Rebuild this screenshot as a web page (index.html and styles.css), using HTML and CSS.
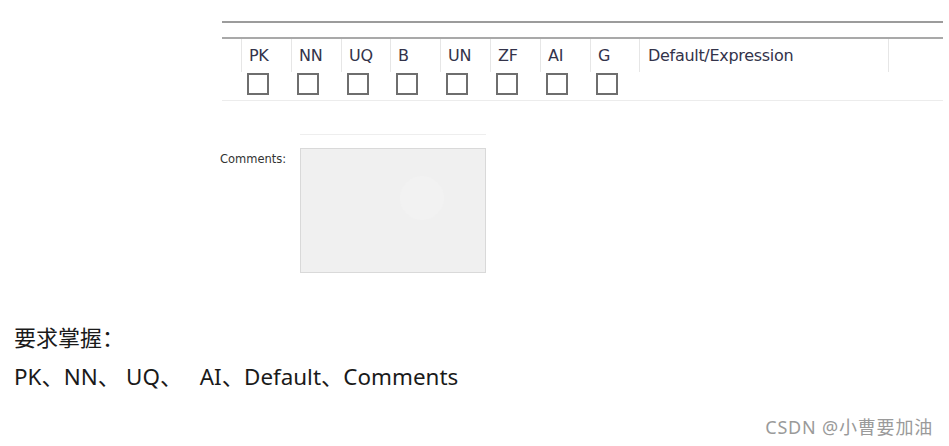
FILE: index.html
```html
<!DOCTYPE html>
<html>
<head>
  <meta charset="utf-8">
  <title>Columns</title>
  <link rel="stylesheet" href="styles.css">
</head>
<body>

  <div class="table">
    <div class="rule-top"></div>
    <div class="rule-second"></div>

    <div class="grid">
      <div class="head"></div>
      <div class="head">PK</div>
      <div class="head">NN</div>
      <div class="head">UQ</div>
      <div class="head">B</div>
      <div class="head">UN</div>
      <div class="head">ZF</div>
      <div class="head">AI</div>
      <div class="head">G</div>
      <div class="head wide">Default/Expression</div>
      <div class="head"></div>

      <div class="cell"></div>
      <div class="cell"><span class="check"></span></div>
      <div class="cell"><span class="check"></span></div>
      <div class="cell"><span class="check"></span></div>
      <div class="cell"><span class="check"></span></div>
      <div class="cell"><span class="check"></span></div>
      <div class="cell"><span class="check"></span></div>
      <div class="cell"><span class="check"></span></div>
      <div class="cell"><span class="check"></span></div>
      <div class="cell"></div>
      <div class="cell"></div>
    </div>

    <div class="rule-bottom"></div>
  </div>
  <!-- /.table -->

  <div class="comments">
    <label class="comments-label">Comments:</label>
    <div class="field">
      <div class="field-line"></div>
      <div class="field-box"></div>
    </div>
  </div>

  <div class="notes">
    <p>要求掌握：</p>
    <p class="keys">PK、NN、 UQ、   AI、Default、Comments</p>
  </div>

  <div class="mark">CSDN @小曹要加油</div>

</body>
</html>
```

FILE: styles.css
```css
body {
  margin: 0;
  background: #FFF;
  color: #1A1A1A;
  font-family: "Noto Sans", "Noto Sans CJK SC", sans-serif;
}

/* column editor strip */

.table {
  margin-left: 222px;
  width: 721px;
  padding-top: 21px;
}

.rule-top {
  height: 2px;
  background: #9C9C9C;
  margin-bottom: 14px;
}

.rule-second {
  height: 2px;
  background: #A9A9A9;
}

.grid {
  display: grid;
  grid-template-columns: 19px 50px 50px 49px 50px 50px 50px 50px 49px 249px 1fr;
  font-family: "DejaVu Sans", sans-serif;
  font-size: 16px;
  letter-spacing: -0.3px;
  color: #33334A;
}

.head {
  height: 33px;
  line-height: 34px;
  padding-left: 7px;
  border-left: 1px solid #E6E6E6;
}

.head:first-child {
  border-left: 0 none;
}

.head.wide {
  padding-left: 8px;
}

.cell {
  height: 28px;
  padding-left: 6px;
}

.check {
  display: block;
  width: 18px;
  height: 18px;
  margin-top: 1px;
  border: 2px solid #6E6E6E;
}

.rule-bottom {
  height: 1px;
  background: #ECECEC;
}

/* comments */

.comments {
  display: flex;
  gap: 14px;
  margin: 33px 0 0 220px;
}

.comments-label {
  width: 66px;
  text-align: right;
  font-family: "DejaVu Sans", sans-serif;
  font-size: 11.5px;
  color: #333;
  padding-top: 18px;
}

.field {
  width: 186px;
}

.field-line {
  height: 1px;
  background: #EEE;
  margin-bottom: 13px;
}

.field-box {
  position: relative;
  height: 123px;
  border: 1px solid #D9D9D9;
  background: #F0F0F0;
}

.field-box::after {
  content: "";
  position: absolute;
  left: 99px;
  top: 27px;
  width: 44px;
  height: 44px;
  border-radius: 50%;
  background: #F2F2F2;
}

/* notes below */

.notes {
  margin-top: 45px;
  padding-left: 14px;
  font-size: 22px;
  line-height: 39px;
}

.notes p {
  margin: 0;
}

.keys {
  white-space: pre;
  font-size: 22.4px;
}

.mark {
  margin-top: 21px;
  padding-right: 16px;
  text-align: right;
  font-size: 18px;
  line-height: 20px;
  letter-spacing: 0.8px;
  color: #9A9A9A;
}
```
